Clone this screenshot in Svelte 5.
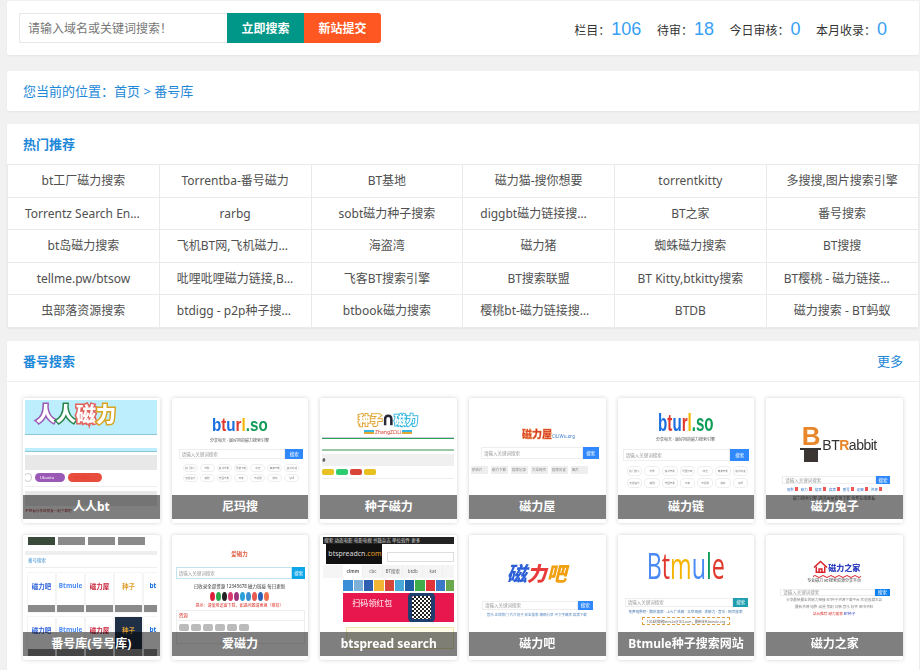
<script>
  const stats = [
    { label: '栏目：', value: 106 },
    { label: '待审：', value: 18 },
    { label: '今日审核：', value: 0 },
    { label: '本月收录：', value: 0 }
  ];

  const hot = [
    'bt工厂磁力搜索', 'Torrentba-番号磁力', 'BT基地', '磁力猫-搜你想要', 'torrentkitty', '多搜搜,图片搜索引擎',
    'Torrentz Search Engine', 'rarbg', 'sobt磁力种子搜索', 'diggbt磁力链接搜索引擎', 'BT之家', '番号搜索',
    'bt岛磁力搜索', '飞机BT网,飞机磁力搜索', '海盗湾', '磁力猪', '蜘蛛磁力搜索', 'BT搜搜',
    'tellme.pw/btsow', '吡哩吡哩磁力链接,BT搜索', '飞客BT搜索引擎', 'BT搜索联盟', 'BT Kitty,btkitty搜索', 'BT樱桃 - 磁力链接搜索',
    '虫部落资源搜索', 'btdigg - p2p种子搜索引擎', 'btbook磁力搜索', '樱桃bt-磁力链接搜索引擎', 'BTDB', '磁力搜索 - BT蚂蚁'
  ];

  const btTags = ['热门搜索', '电影', '最新电影', '迅雷下载', '综艺', '高清电影', '最新动漫', '无损音乐', '美剧', '韩国电影', '日本', '电视剧', '游戏', 'ipv6'];
  const social = ['#e0203c', '#2aa84a', '#222', '#d63a6e', '#a0357d', '#2aa0d8', '#3b8fd0', '#e85a4f', '#2a62b8', '#f0714a'];
  const squares = ['#3a8fd8', '#7cb0d8', '#2f5fb0', '#f2b632', '#d8453a', '#48a8d8', '#1f5fa8', '#3fae4a', '#e0333a', '#3a78c8', '#6aa84f'];
  const miniCards = [
    { logo: '磁力吧', color: '#2a5fd8' },
    { logo: 'Btmule', color: '#4a8af4' },
    { logo: '磁力屋', color: '#c8243c' },
    { logo: '种子', color: '#e0a030' },
    { logo: 'bturl', color: '#1a6fe0' }
  ];
</script>

{#snippet searchRow(kind)}
  <div class="s-row {kind}">
    <span class="s-in">请输入关键词搜索</span><span class="s-btn">搜索</span>
  </div>
{/snippet}

<div class="page">
  <header class="panel top">
    <div class="search">
      <input type="text" placeholder="请输入域名或关键词搜索！" />
      <button class="go">立即搜索</button>
      <button class="add">新站提交</button>
    </div>
    <ul class="stats">
      {#each stats as s}
        <li>{s.label}<b>{s.value}</b></li>
      {/each}
    </ul>
  </header>

  <nav class="panel crumbs">您当前的位置：首页 &gt; 番号库</nav>

  <section class="panel hot">
    <h2 class="head">热门推荐</h2>
    <div class="links">
      {#each hot as name}
        <a href="#top">{name}</a>
      {/each}
    </div>
  </section>

  <section class="panel sites">
    <div class="head split">
      <h2>番号搜索</h2>
      <a href="#top">更多</a>
    </div>
    <div class="cards">
      <div class="card">
        <div class="shot c1">
          <div class="rr-top"><span class="p">人</span><span class="g">人</span><span class="r">磁</span><span class="y">力</span></div>
          <div class="rr-band"></div>
          <div class="rr-grey"></div>
          <div class="rr-pills"><i class="w"></i><i class="pu">Ubuntu</i><i class="re">127.0.0.1</i></div>
          <div class="rr-grey low"></div>
          <div class="rr-note">不想看分享给朋友一起下载吧</div>
        </div>
        <div class="cap">人人bt</div>
      </div>

      <div class="card">
        <div class="shot bt a">
          <div class="bt-logo"><span class="bl">b</span><span class="re">t</span><span class="bl">u</span><span class="re">r</span><span class="ye">l</span><span class="gr">.so</span></div>
          <div class="bt-sub">分享每天 · 最好用的磁力搜索引擎</div>
          {@render searchRow('r2')}
          <div class="tags">{#each btTags as t}<span>{t}</span>{/each}</div>
        </div>
        <div class="cap">尼玛搜</div>
      </div>

      <div class="card">
        <div class="shot c3">
          <div class="zz-logo"><span class="y">种子</span><span class="mag">∩</span><span class="b">磁力</span></div>
          <div class="zz-sub"><i></i><span>ZhangZCiLi</span><i></i></div>
          <div class="zz-green"></div>
          <div class="zz-pale"></div>
          <div class="zz-grey">#</div>
          <div class="zz-pills"><i class="y"></i><i class="g"></i><i class="r"></i><i class="y"></i></div>
          <div class="zz-rule"></div>
        </div>
        <div class="cap">种子磁力</div>
      </div>

      <div class="card">
        <div class="shot c4">
          <div class="cw-logo">磁力屋<small>CiLiWu.org</small></div>
          {@render searchRow('r4')}
          <div class="cw-tags">{#each ['预告片', '磁力下载', '搜索记录', '大全网页', '搜索历史', '图片'] as t}<span>{t}</span>{/each}</div>
        </div>
        <div class="cap">磁力屋</div>
      </div>

      <div class="card">
        <div class="shot bt b">
          <div class="bt-logo"><span class="bl">b</span><span class="re">t</span><span class="bl">u</span><span class="re">r</span><span class="ye">l</span><span class="gr">.so</span></div>
          <div class="bt-sub">分享每天 · 最好用的磁力搜索引擎</div>
          {@render searchRow('r5')}
          <div class="tags">{#each btTags as t}<span>{t}</span>{/each}</div>
        </div>
        <div class="cap">磁力链</div>
      </div>

      <div class="card">
        <div class="shot c6">
          <div class="rb-logo">
            <div class="rb-mark"><b>B</b><i class="brim"></i><i class="hat"></i></div>
            <span>BT<em>R</em>abbit</span>
          </div>
          {@render searchRow('r6')}
          <div class="rb-links">{#each ['电影', '磁力', '搜索', '高清', '番号', '迅雷', '资源'] as t}<span>{t}<i></i></span>{/each}</div>
          <div class="rb-line">磁力搜索引擎 提供海量资源下载 免费在线观看</div>
        </div>
        <div class="cap">磁力兔子</div>
      </div>

      <div class="card">
        <div class="shot c7">
          <div class="fh-nav"><i class="dk"></i><i></i><i></i><i></i></div>
          <div class="fh-bar"></div>
          <div class="fh-title">番号搜索</div>
          <div class="fh-row">{#each miniCards as m}<div class="mini"><span style="color:{m.color}">{m.logo}</span><u></u></div>{/each}</div>
          <div class="fh-row second">{#each miniCards as m, i}<div class="mini" class:night={i === 3}><span style="color:{m.color}">{m.logo}</span><u></u></div>{/each}</div>
        </div>
        <div class="cap">番号库(号号库)</div>
      </div>

      <div class="card">
        <div class="shot c8">
          <div class="ai-logo">爱磁力</div>
          {@render searchRow('r8')}
          <div class="ai-text">已收录全部资源 12345678 磁力链接 每日更新</div>
          <div class="ai-dots">{#each social as c}<i style="background:{c}"></i>{/each}</div>
          <div class="ai-red">提示：请使用迅雷下载，如遇问题请更换（推荐）</div>
          <div class="ai-box">
            <div class="ai-hd">资源</div>
            <div class="ai-btns"><i></i><i></i><i></i><i></i><i></i><i></i></div>
          </div>
        </div>
        <div class="cap">爱磁力</div>
      </div>

      <div class="card">
        <div class="shot c9">
          <div class="sp-nav">搜索 动态电影 电影电视 书籍杂志 单位软件 更多</div>
          <div class="sp-head"><span class="sp-logo">btspreadcn<em>.com</em></span><span class="sp-in"></span></div>
          <div class="sp-tabs"><span class="on">clmm</span><span>cbc</span><span>BT搜索</span><span>btdb</span><span>kat</span></div>
          <div class="sp-body">
            <div class="sp-squares">{#each squares as c}<i style="background:{c}"></i>{/each}</div>
            <div class="sp-banner"><span>扫码领红包</span><i class="qr"></i></div>
            <div class="sp-pale"></div>
          </div>
        </div>
        <div class="cap">btspread search</div>
      </div>

      <div class="card">
        <div class="shot c10">
          <div class="cb-logo"><span class="b">磁</span><span class="r">力</span><span class="y">吧</span></div>
          {@render searchRow('r10')}
          <div class="cb-links">音乐 正版热门 片片段子 安全搜索 精确分享 中文字幕库 高清下载</div>
        </div>
        <div class="cap">磁力吧</div>
      </div>

      <div class="card">
        <div class="shot c11">
          <div class="mu-logo"><div><span class="bl">B</span><span class="re">t</span><span class="ye">m</span><span class="bl">u</span><span class="gr">l</span><span class="re">e</span></div></div>
          {@render searchRow('r11')}
          <div class="mu-links">免费电影吧 · 腾讯搜索 · 上火广告网 · 太空视频 · 求磁力 · 音乐 · 网页搜索</div>
          <div class="mu-box">1024的邮箱btmule@163.com，最新域名btmule.org</div>
        </div>
        <div class="cap">Btmule种子搜索网站</div>
      </div>

      <div class="card">
        <div class="shot c12">
          <div class="hm-logo">
            <svg viewBox="0 0 16 16" width="15" height="15" fill="none" stroke="#d8232a" stroke-width="1.6"><path d="M1 8 8 1.5 15 8" /><path d="M3.5 7v6h9V7" /><path d="M6.5 13V9.5h3V13" /></svg>
            <span>磁力之家</span>
          </div>
          <svg class="hm-wave" viewBox="0 0 48 3" width="48" height="3" fill="none" stroke="#d8232a" stroke-width="1"><path d="M0 1.5q2-2 4 0t4 0 4 0 4 0 4 0 4 0 4 0 4 0 4 0 4 0 4 0 4 0" /></svg>
          <div class="hm-sub">专业磁力 BT搜索资源分享平台</div>
          {@render searchRow('r12')}
          <div class="hm-t">分享最新最全的磁力链接 BT种子资源下载平台 欢迎收藏本站</div>
          <div class="hm-t">最新资源 电影 动漫 美剧 日韩 音乐 软件 图书资料</div>
          <div class="hm-t red">站长推荐 磁力搜索 <em>BT种子</em></div>
        </div>
        <div class="cap">磁力之家</div>
      </div>
    </div>
  </section>
</div>

<style>
  :global(body) {
    margin: 0;
    background: #f1f1f1;
    font-family: "Noto Sans", "Noto Sans CJK SC", sans-serif;
    font-size: 12px;
    color: #555;
    overflow: hidden;
  }

  .page {
    padding: 1px 1px 0 7px;
    height: 669px;
    overflow: hidden;
  }

  .panel {
    background: #fff;
    box-shadow: 0 1px 2px rgba(0, 0, 0, 0.05);
    border-radius: 2px;
  }

  .top {
    height: 54px;
    display: flex;
    align-items: center;
    justify-content: space-between;
    padding: 0 32px 0 12px;
    box-sizing: border-box;
    margin-bottom: 16px;
  }

  .search {
    display: flex;
    height: 30px;
  }

  .search input {
    width: 208px;
    box-sizing: border-box;
    border: 1px solid #e6e6e6;
    border-right: 0;
    border-radius: 2px 0 0 2px;
    padding: 0 8px;
    font: inherit;
    outline: none;
  }

  .search input::placeholder {
    color: #777;
  }

  .search button {
    width: 77px;
    border: 0;
    color: #fff;
    font: inherit;
    font-weight: 700;
  }

  .go {
    background: #009688;
  }

  .add {
    background: #ff5722;
    border-radius: 0 3px 3px 0;
  }

  .stats {
    list-style: none;
    margin: 2px 0 0;
    padding: 0;
    display: flex;
    gap: 15.5px;
    color: #333;
    align-items: baseline;
  }

  .stats b {
    font-family: "Liberation Sans", sans-serif;
    font-size: 18px;
    font-weight: 400;
    color: #389ff5;
    margin-left: 1px;
  }

  .crumbs {
    height: 40px;
    line-height: 40px;
    padding-left: 16px;
    font-size: 13px;
    color: #1e88d8;
    margin-bottom: 13px;
  }

  .hot {
    margin-bottom: 13px;
  }

  .head {
    height: 40px;
    line-height: 40px;
    margin: 0;
    padding: 0 16px;
    font-size: 13px;
    font-weight: 700;
    color: #1e88d8;
    box-sizing: border-box;
  }

  .links {
    display: grid;
    grid-template-columns: repeat(6, 1fr);
    margin-right: 0.5px;
    border-top: 1px solid #eaeaea;
    border-left: 1px solid #eaeaea;
  }

  .links a {
    height: 32.6px;
    line-height: 32px;
    box-sizing: border-box;
    padding: 0 17px;
    text-align: center;
    color: #505050;
    text-decoration: none;
    white-space: nowrap;
    overflow: hidden;
    text-overflow: ellipsis;
    border-right: 1px solid #eaeaea;
    border-bottom: 1px solid #eaeaea;
  }

  .split {
    display: flex;
    justify-content: space-between;
    height: 41px;
    border-bottom: 1px solid #eee;
  }

  .split h2 {
    margin: 0;
    font-size: 13px;
  }

  .split a {
    font-weight: 400;
    color: #1e88d8;
    text-decoration: none;
  }

  .cards {
    display: grid;
    grid-template-columns: repeat(6, 1fr);
    gap: 12px;
    padding: 16px;
  }

  .card {
    position: relative;
    height: 125px;
    background: #fff;
    box-shadow: 0 0 4px rgba(0, 0, 0, 0.18);
    overflow: hidden;
    border-radius: 2px;
  }

  .shot {
    height: 119px;
    margin: 2px 3px 0 2px;
    overflow: hidden;
    filter: blur(0.35px);
    font-size: 5px;
    color: #666;
    white-space: nowrap;
  }

  .cap {
    position: absolute;
    left: 0;
    right: 0;
    bottom: 4px;
    height: 24px;
    line-height: 24px;
    text-align: center;
    background: rgba(0, 0, 0, 0.5);
    color: #fff;
    font-weight: 700;
    white-space: nowrap;
  }

  i {
    display: block;
    font-style: normal;
  }

  em {
    font-style: normal;
  }

  /* little search box used in most thumbnails */
  .s-row {
    display: flex;
    font-size: 4.5px;
    color: #999;
  }

  .s-in {
    flex: 1;
    border: 1px solid #eee;
    padding-left: 2px;
    display: flex;
    align-items: center;
  }

  .s-btn {
    background: #2f89fc;
    color: #fff;
    display: flex;
    align-items: center;
    justify-content: center;
  }

  .r2 { height: 10px; margin: 5px 2px 0 5px; }
  .r2 .s-btn { width: 18px; }
  .r4 { height: 12px; margin: 5px 4px 0 10px; }
  .r4 .s-btn { width: 16px; }
  .r5 { height: 12px; margin: 6px 2px 0 3px; }
  .r5 .s-btn { width: 19px; }
  .r6 { height: 8px; margin: 14px 10px 0 14px; }
  .r6 .s-btn { width: 14px; }
  .r8 { height: 12px; margin: 8px 0 0 2px; }
  .r8 .s-in { border-color: #bfe6ee; }
  .r8 .s-btn { width: 13px; background: #0ea5e9; }
  .r10 { height: 9px; margin: 12px 10px 0 11px; }
  .r10 .s-btn { width: 15px; }
  .r11 { height: 9px; margin: 13px 3px 0 5px; }
  .r11 .s-btn { width: 15px; background: #1f9fb0; }
  .r12 { height: 7px; margin: 5px 10px 0 12px; }
  .r12 .s-btn { width: 15px; background: #1082f0; }

  /* 人人bt */
  .rr-top {
    height: 35px;
    background: #bdeefe;
    border-bottom: 1px solid #8cc6d6;
    padding: 3px 0 0 11px;
    box-sizing: border-box;
    font-size: 20px;
    line-height: 24px;
    font-weight: 900;
  }

  .rr-top span {
    -webkit-text-stroke: 3px currentColor;
    paint-order: stroke fill;
    color: #fff;
  }

  .rr-top .p { -webkit-text-stroke-color: #9b59b6; }
  .rr-top .g { -webkit-text-stroke-color: #27854a; }
  .rr-top .r { -webkit-text-stroke-color: #e0645c; }
  .rr-top .y { -webkit-text-stroke-color: #d8a520; }

  .rr-band {
    height: 3px;
    margin-top: 13px;
    background: #bdeefe;
    border-bottom: 1px solid #8cc6d6;
  }

  .rr-grey {
    height: 15px;
    margin-top: 3px;
    background: #e8e8e8;
  }

  .rr-grey.low {
    margin-top: 4px;
  }

  .rr-pills {
    display: flex;
    gap: 3px;
    height: 9px;
    padding: 3px 0 4px;
    border-bottom: 1px solid #eee;
    font-size: 4px;
    line-height: 9px;
    color: #fff;
  }

  .rr-pills i {
    border-radius: 5px;
    padding: 0 5px;
  }

  .rr-pills .w {
    width: 6px;
    padding: 0;
    margin-left: -1px;
    border: 1px solid #ccc;
    height: 7px;
  }

  .rr-pills .pu {
    width: 20px;
    background: #9b59b6;
  }

  .rr-pills .re {
    width: 24px;
    background: #e74c3c;
  }

  .rr-note {
    font-size: 3.6px;
    color: #a33;
    margin-top: 2px;
  }

  /* bturl.so */
  .bt {
    text-align: center;
    padding-top: 16px;
    box-sizing: border-box;
  }

  .bt-logo {
    font-family: "Liberation Sans", sans-serif;
    font-size: 19px;
    line-height: 18px;
    font-weight: 700;
    transform: scaleX(0.8);
  }

  .bl { color: #1a6fe0; }
  .re { color: #e0382c; }
  .ye { color: #f5b400; }
  .gr { color: #0f9d58; }

  .bt-sub {
    margin-top: 3px;
    height: 7px;
    line-height: 7px;
    color: #555;
    font-size: 4px;
  }

  .tags {
    display: grid;
    grid-template-columns: repeat(7, 1fr);
    gap: 2px;
    margin: 5px 6px 0 9px;
  }

  .tags span {
    border: 1px solid #eee;
    border-radius: 4px;
    font-size: 2.6px;
    line-height: 6px;
    color: #888;
    overflow: hidden;
  }

  .bt.b {
    padding-top: 12px;
  }

  .bt.b .bt-logo {
    font-size: 24px;
    line-height: 22px;
    transform: scaleX(0.63);
  }

  .bt.b .bt-sub {
    margin-top: 2px;
  }

  .bt.b .tags {
    margin: 5px 3px 0 7px;
  }

  .bt.b .tags span {
    line-height: 8px;
  }

  /* 种子磁力 */
  .zz-logo {
    text-align: center;
    padding-top: 13px;
    height: 16px;
    line-height: 16px;
    font-size: 12px;
    font-weight: 900;
    color: #fff;
    box-sizing: content-box;
  }

  .zz-logo span {
    paint-order: stroke fill;
  }

  .zz-logo .y { -webkit-text-stroke: 2px #e0a838; }
  .zz-logo .b { -webkit-text-stroke: 2px #38b8e0; }
  .zz-logo .mag { color: #223; -webkit-text-stroke: 1px #223; }

  .zz-sub {
    display: flex;
    justify-content: center;
    align-items: center;
    gap: 1px;
    color: #d8362a;
    font-size: 5px;
    line-height: 6px;
  }

  .zz-sub i {
    width: 10px;
    height: 4px;
    background: linear-gradient(#38b8e0 0 50%, #e0a838 50%);
  }

  .zz-green {
    height: 1px;
    margin-top: 3px;
    background: #27a55a;
    box-shadow: 0 -1px 0 #ccd;
  }

  .zz-pale {
    height: 2px;
    margin-top: 10px;
    background: #9cc8a8;
  }

  .zz-grey {
    height: 12px;
    line-height: 12px;
    margin-top: 3px;
    background: #f0f0f0;
    color: #333;
    font-size: 5px;
    font-weight: 700;
  }

  .zz-pills {
    display: flex;
    gap: 2px;
    margin-top: 3px;
    height: 6px;
  }

  .zz-pills i {
    width: 12px;
    border-radius: 2px;
  }

  .zz-pills .y { background: #e8c020; }
  .zz-pills .g { background: #2ecc71; }
  .zz-pills .r { background: #d9453a; }

  .zz-rule {
    height: 1px;
    margin-top: 3px;
    background: #eee;
  }

  /* 磁力屋 */
  .cw-logo {
    padding: 26px 0 0 51px;
    height: 16px;
    line-height: 16px;
    font-size: 10px;
    font-weight: 900;
    color: #d8322a;
    -webkit-text-stroke: 0.4px #e88a3a;
    box-sizing: content-box;
  }

  .cw-logo small {
    font-size: 4.5px;
    font-weight: 400;
    color: #3a78c8;
    -webkit-text-stroke: 0;
  }

  .cw-tags {
    display: flex;
    gap: 3px;
    margin-top: 7px;
  }

  .cw-tags span {
    background: #eee;
    font-size: 3.5px;
    line-height: 8px;
    padding: 0 1px;
    width: 15px;
    flex: none;
    overflow: hidden;
    color: #888;
  }

  /* 磁力兔子 */
  .rb-logo {
    display: flex;
    align-items: center;
    padding: 24px 0 0 32px;
    gap: 1px;
    font-family: "Liberation Sans", sans-serif;
    font-size: 14px;
    letter-spacing: -0.5px;
    color: #333;
    height: 38px;
    box-sizing: content-box;
  }

  .rb-logo em {
    color: #e8862a;
    font-weight: 700;
  }

  .rb-logo span {
    margin-top: 4px;
  }

  .rb-mark {
    width: 21px;
    text-align: center;
    line-height: 1;
  }

  .rb-mark b {
    display: block;
    font-size: 26px;
    line-height: 24px;
    color: #e8862a;
  }

  .brim {
    height: 2px;
    background: #333;
  }

  .hat {
    width: 14px;
    height: 12px;
    margin: 0 auto;
    background: #3a3533;
  }

  .rb-links {
    display: flex;
    justify-content: center;
    gap: 3px;
    margin-top: 3px;
    font-size: 3.5px;
    line-height: 5px;
    color: #3a78c8;
  }

  .rb-links span {
    display: flex;
    gap: 1px;
  }

  .rb-links i {
    width: 3px;
    height: 4px;
    background: #e55;
  }

  .rb-line {
    text-align: center;
    font-size: 4px;
    margin-top: 3px;
  }

  /* 番号库 */
  .fh-nav {
    display: flex;
    gap: 3px;
    padding-left: 3px;
    margin-top: -2px;
    height: 10px;
  }

  .fh-nav i {
    width: 27px;
    background: #8a8a8a;
  }

  .fh-nav .dk {
    background: #3a4a3a;
  }

  .fh-bar {
    height: 4px;
    margin-top: 6px;
    background: #eee;
  }

  .fh-title {
    color: #3a8fd0;
    font-size: 4.5px;
    line-height: 11px;
    height: 12px;
    padding-left: 3px;
    border-bottom: 1px solid #eee;
  }

  .fh-row {
    display: flex;
    gap: 2px;
    padding-left: 3px;
    margin-top: 5px;
    height: 39px;
  }

  .fh-row.second {
    margin-top: 5px;
  }

  .mini {
    flex: none;
    width: 27px;
    box-shadow: 0 0 1px rgba(0, 0, 0, 0.25);
    display: flex;
    flex-direction: column;
    align-items: center;
    justify-content: space-between;
    padding-top: 8px;
    box-sizing: border-box;
    font-size: 6.5px;
    font-weight: 700;
    overflow: hidden;
  }

  .mini u {
    display: block;
    width: 100%;
    height: 7px;
    background: #8a8a8a;
  }

  .mini.night {
    background: #1f2f45;
  }

  /* 爱磁力 */
  .ai-logo {
    text-align: center;
    color: #e0583c;
    font-size: 5.5px;
    font-weight: 700;
    padding-top: 12px;
    line-height: 10px;
    height: 10px;
    box-sizing: content-box;
  }

  .ai-text {
    text-align: center;
    font-size: 4.5px;
    color: #333;
    line-height: 6px;
    margin-top: 4px;
  }

  .ai-dots {
    display: flex;
    justify-content: center;
    gap: 1px;
    margin-top: 3px;
  }

  .ai-dots i {
    width: 5px;
    height: 9px;
    border-radius: 50%;
  }

  .ai-red {
    text-align: center;
    color: #d8322a;
    font-size: 4px;
    line-height: 5px;
    margin-top: 2px;
  }

  .ai-box {
    margin: 2px 0 0 2px;
    border: 1px solid #eee;
    height: 32px;
  }

  .ai-hd {
    color: #d8322a;
    font-size: 4.5px;
    line-height: 9px;
    padding-left: 2px;
    border-bottom: 1px solid #eee;
  }

  .ai-btns {
    display: flex;
    gap: 2px;
    padding: 3px 2px;
  }

  .ai-btns i {
    width: 10px;
    height: 7px;
    border-radius: 2px;
    background: #bbb;
  }

  /* btspread */
  .c9 {
    margin-left: 3px;
  }

  .sp-nav {
    background: #222;
    color: #ddd;
    font-size: 4.5px;
    line-height: 7px;
    padding-left: 1px;
  }

  .sp-head {
    display: flex;
    gap: 5px;
    height: 20px;
    align-items: flex-start;
    background: #fff;
  }

  .sp-logo {
    width: 56px;
    height: 20px;
    margin-left: 3px;
    background: #111;
    color: #ddd;
    font-size: 7px;
    line-height: 20px;
    padding-left: 2px;
    box-sizing: border-box;
    flex: none;
    overflow: hidden;
  }

  .sp-logo em {
    color: #e8a030;
  }

  .sp-in {
    flex: 1;
    height: 10px;
    margin-top: 8px;
    box-sizing: border-box;
    border: 1px solid #ddd;
  }

  .sp-tabs {
    display: flex;
    padding-left: 20px;
    height: 13px;
    background: #f5f5f5;
    margin-top: 1px;
    font-size: 4.5px;
    line-height: 13px;
  }

  .sp-tabs span {
    width: 19px;
    text-align: center;
    flex: none;
    border-right: 1px solid #eee;
  }

  .sp-tabs .on {
    background: #fff;
    font-weight: 700;
  }

  .sp-body {
    padding: 2px 0 0 20px;
  }

  .sp-squares {
    display: flex;
    gap: 1px;
  }

  .sp-squares i {
    width: 9.3px;
    height: 11px;
    flex: none;
  }

  .sp-banner {
    display: flex;
    gap: 20px;
    height: 29px;
    margin-top: 2px;
    background: #e8174e;
    color: #fff;
    font-size: 8px;
    line-height: 14px;
    padding: 3px 0 0 9px;
    box-sizing: border-box;
    overflow: hidden;
  }

  .qr {
    width: 19px;
    height: 23px;
    background: repeating-conic-gradient(#222 0 25%, #fff 0 50%) 0 0 / 4px 4px;
    box-shadow: 0 0 0 4px #1f3f6f;
    border-radius: 2px;
  }

  .sp-pale {
    height: 20px;
    margin: 5px 0 0 3px;
    border: 1px solid #f0e8b0;
    background: #fffde8;
  }

  /* 磁力吧 */
  .cb-logo {
    text-align: center;
    padding-top: 22px;
    height: 30px;
    line-height: 30px;
    font-size: 20px;
    font-weight: 900;
    font-style: italic;
    box-sizing: content-box;
  }

  .cb-logo .b { color: #2a5fd8; }
  .cb-logo .r { color: #e83a3a; }
  .cb-logo .y { color: #f0a010; }

  .cb-links {
    text-align: center;
    color: #5a8ac0;
    font-size: 3.5px;
    line-height: 5px;
    margin-top: 2px;
  }

  /* Btmule */
  .mu-logo {
    text-align: center;
    font-family: "Open Sans", sans-serif;
    font-size: 37px;
    line-height: 40px;
    height: 40px;
    padding-top: 8px;
    box-sizing: content-box;
  }

  .mu-logo div {
    transform: scaleX(0.63);
  }

  .mu-logo .bl { color: #4a8af4; }

  .mu-links {
    text-align: center;
    color: #4a7ab0;
    font-size: 3.6px;
    line-height: 6px;
    margin-top: 2px;
  }

  .mu-box {
    margin: 2px 21px 0 22px;
    height: 8px;
    line-height: 7px;
    border: 1px dashed #e0a040;
    text-align: center;
    font-size: 3.3px;
    overflow: hidden;
    box-sizing: border-box;
  }

  /* 磁力之家 */
  .hm-logo {
    display: flex;
    align-items: center;
    gap: 0;
    padding: 23px 0 0 45px;
    height: 15px;
    color: #2f3fc0;
    font-size: 8px;
    font-weight: 900;
    box-sizing: content-box;
  }

  .hm-wave {
    display: block;
    margin-left: 45px;
  }

  .hm-sub {
    text-align: center;
    font-size: 4px;
    line-height: 6px;
    color: #444;
  }

  .hm-t {
    text-align: center;
    font-size: 3.6px;
    line-height: 6px;
    margin-top: 1px;
    color: #888;
  }

  .hm-t.red {
    color: #d8322a;
  }

  .hm-t.red em {
    color: #2f3fc0;
  }
</style>
